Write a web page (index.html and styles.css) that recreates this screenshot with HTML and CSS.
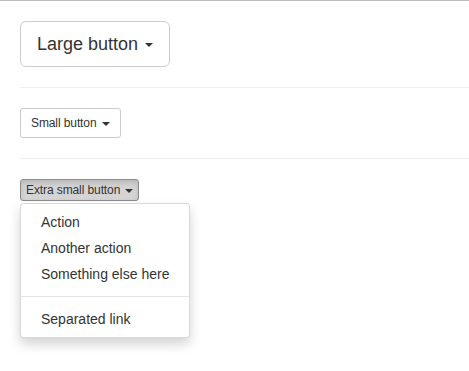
FILE: index.html
```html
<!DOCTYPE html>
<html>
<head>
<meta charset="utf-8">
<link rel="stylesheet" href="styles.css">
</head>
<body>
<div class="page">
  <div class="btn-group">
    <button class="btn btn-lg">Large button <span class="caret"></span></button>
  </div>
  <hr>
  <div class="btn-group">
    <button class="btn btn-sm">Small button <span class="caret"></span></button>
  </div>
  <hr>
  <div class="btn-group open">
    <button class="btn btn-xs active">Extra small button <span class="caret"></span></button>
    <ul class="dropdown-menu">
      <li><a href="#">Action</a></li>
      <li><a href="#">Another action</a></li>
      <li><a href="#">Something else here</a></li>
      <li class="divider"></li>
      <li><a href="#">Separated link</a></li>
    </ul>
  </div>
</div>
</body>
</html>
```

FILE: styles.css
```css
html, body {
  margin: 0;
  padding: 0;
  background: #fff;
}
body {
  font-family: "Liberation Sans", Arial, sans-serif;
  font-size: 14px;
  line-height: 1.42857143;
  color: #333;
  border-top: 1px solid #bcbcbc;
  min-height: 370px;
}
.page {
  padding: 20px 0 20px 20px;
  min-height: 320px;
}
hr {
  margin: 20px 0;
  border: 0;
  border-top: 1px solid #eee;
  height: 0;
}
.btn-group {
  position: relative;
  display: inline-block;
  vertical-align: middle;
}
.btn {
  display: inline-block;
  margin: 0;
  font-family: inherit;
  font-weight: normal;
  text-align: center;
  white-space: nowrap;
  vertical-align: middle;
  cursor: pointer;
  background: #fff;
  color: #333;
  border: 1px solid #ccc;
  padding: 6px 12px;
  font-size: 14px;
  line-height: 1.42857143;
  border-radius: 4px;
}
.btn-lg {
  padding: 10px 16px;
  font-size: 18px;
  line-height: 1.3333333;
  border-radius: 6px;
}
.btn-sm {
  padding: 5px 10px;
  font-size: 12px;
  line-height: 1.5;
  border-radius: 3px;
  letter-spacing: -0.1px;
}
.btn-xs {
  padding: 1px 5px;
  font-size: 12px;
  line-height: 1.5;
  border-radius: 3px;
  letter-spacing: -0.1px;
}
.btn.active {
  background: #d4d4d4;
  border-color: #8c8c8c;
  box-shadow: inset 0 3px 5px rgba(0,0,0,.125);
}
.caret {
  display: inline-block;
  width: 0;
  height: 0;
  margin-left: 2px;
  vertical-align: middle;
  border-top: 4px solid;
  border-right: 4px solid transparent;
  border-left: 4px solid transparent;
}
.dropdown-menu {
  position: absolute;
  top: 100%;
  left: 0;
  z-index: 1000;
  min-width: 160px;
  padding: 5px 0;
  margin: 2px 0 0;
  list-style: none;
  font-size: 14px;
  text-align: left;
  background: #fff;
  border: 1px solid rgba(0,0,0,.15);
  border-radius: 4px;
  box-shadow: 0 6px 12px rgba(0,0,0,.175);
}
.dropdown-menu a {
  display: block;
  padding: 3px 20px;
  clear: both;
  line-height: 1.42857143;
  color: #333;
  white-space: nowrap;
  text-decoration: none;
}
.dropdown-menu .divider {
  height: 1px;
  margin: 9px 0;
  overflow: hidden;
  background: #e5e5e5;
}
```
